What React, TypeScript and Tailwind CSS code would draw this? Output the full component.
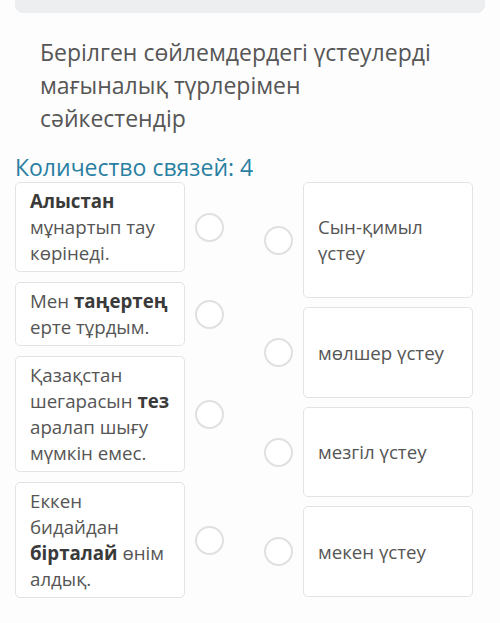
const left: { parts: [string, boolean][] }[] = [
  { parts: [["Алыстан", true], [" мұнартып тау көрінеді.", false]] },
  { parts: [["Мен ", false], ["таңертең", true], [" ерте тұрдым.", false]] },
  { parts: [["Қазақстан шегарасын ", false], ["тез", true], [" аралап шығу мүмкін емес.", false]] },
  { parts: [["Еккен\nбидайдан ", false], ["бірталай", true], [" өнім алдық.", false]] },
];

const right = [
  { text: "Сын-қимыл үстеу", h: "h-[116px]" },
  { text: "мөлшер үстеу", h: "h-[91px]" },
  { text: "мезгіл үстеу", h: "h-[90px]" },
  { text: "мекен үстеу", h: "h-[91px]" },
];

function Dot() {
  return <div className="w-[29px] h-[29px] shrink-0 rounded-full border-[2.5px] border-[#e0e0e0] bg-white" />;
}

export default function App() {
  return (
    <div className="min-h-[623px] bg-[#fdfdfd] px-[15px] font-['Open_Sans',sans-serif] text-[#555]">
      <div className="h-[13px] rounded-b-lg bg-[#eceef0]" />
      <h1 className="mt-[23px] pl-[25px] pr-[35px] text-[23px] leading-[33px] font-normal text-[#565656]">
        Берілген сөйлемдердегі үстеулерді мағыналық түрлерімен сәйкестендір
      </h1>
      <div className="mt-[17px] text-[23px] leading-[30px] text-[#2a80a2]">Количество связей: 4</div>
      <div className="flex gap-[40px]">
        <div className="flex flex-col gap-[10px]">
          {left.map((row, i) => (
            <div key={i} className="flex items-center gap-[10px]">
              <div className="w-[170px] whitespace-pre-line rounded-[5px] border border-[#e3e3e3] bg-white pl-[14px] pr-[8px] py-[5px] text-[18.7px] leading-[26px]">
                {row.parts.map(([t, b], j) =>
                  b ? (
                    <b key={j} className="font-bold text-[#3a3a3a]">{t}</b>
                  ) : (
                    <span key={j}>{t}</span>
                  )
                )}
              </div>
              <Dot />
            </div>
          ))}
        </div>
        <div className="flex flex-col gap-[9px]">
          {right.map((r, i) => (
            <div key={i} className="flex items-center gap-[10px]">
              <Dot />
              <div className={`w-[170px] ${r.h} flex items-center rounded-[5px] border border-[#e3e3e3] bg-white px-[14px] text-[18.7px] leading-[26px]`}>
                {r.text}
              </div>
            </div>
          ))}
        </div>
      </div>
    </div>
  );
}
